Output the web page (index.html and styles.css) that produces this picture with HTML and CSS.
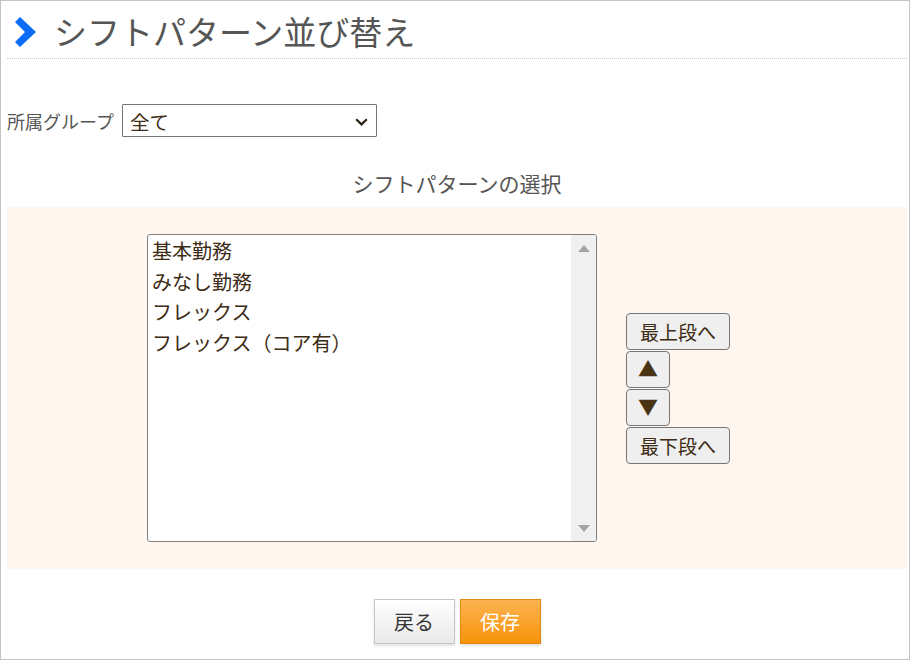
FILE: index.html
```html
<!DOCTYPE html>
<html lang="ja">
<head>
<meta charset="utf-8">
<title>シフトパターン並び替え</title>
<link rel="stylesheet" href="styles.css">
</head>
<body>
<div class="frame">
  <div class="title-row">
    <svg class="chev" width="21" height="30" viewBox="0 0 21 30"><polygon points="0,5 5,0 21,15 5,30 0,25 10,15" fill="#0b6cf6"/></svg>
    <h1 class="title">シフトパターン並び替え</h1>
  </div>

  <div class="form-row">
    <label class="label" for="grp">所属グループ</label>
    <div class="select-wrap">
      <select id="grp" class="select"><option>全て</option></select>
      <svg class="select-arrow" width="13" height="8" viewBox="0 0 13 8"><polyline points="1.2,1.2 6.5,6.4 11.8,1.2" fill="none" stroke="#2b2015" stroke-width="2.2"/></svg>
    </div>
  </div>

  <div class="section-head">シフトパターンの選択</div>

  <div class="panel">
    <div class="listbox">
      <div class="items">
        <div class="item">基本勤務</div>
        <div class="item">みなし勤務</div>
        <div class="item">フレックス</div>
        <div class="item">フレックス（コア有）</div>
      </div>
      <div class="scrollbar">
        <svg width="12" height="7" viewBox="0 0 12 7"><polygon points="0,7 6,0 12,7" fill="#a3a3a3"/></svg>
        <svg width="12" height="7" viewBox="0 0 12 7"><polygon points="0,0 12,0 6,7" fill="#a3a3a3"/></svg>
      </div>
    </div>
    <div class="move-btns">
      <button class="mbtn wide">最上段へ</button>
      <button class="mbtn narrow">▲</button>
      <button class="mbtn narrow">▼</button>
      <button class="mbtn wide">最下段へ</button>
    </div>
  </div>

  <div class="footer">
    <button class="fbtn back">戻る</button>
    <button class="fbtn save">保存</button>
  </div>
</div>
</body>
</html>
```

FILE: styles.css
```css
html, body {
  margin: 0;
  padding: 0;
  background: #fff;
}
body {
  font-family: "Noto Sans CJK JP", "Noto Sans", sans-serif;
  color: #3d2b14;
}
.frame {
  width: 910px;
  height: 660px;
  box-sizing: border-box;
  border: 1px solid #c4c4c4;
  padding: 0 2px 0 6px;
  overflow: hidden;
}
.title-row {
  display: flex;
  align-items: center;
  padding: 10px 0 7px 8px;
  border-bottom: 1px dotted #c8c8c8;
}
.chev {
  display: block;
  margin-top: 1px;
  flex: none;
}
.title {
  margin: 0 0 0 18px;
  font-size: 33px;
  line-height: 40px;
  font-weight: 400;
  color: #555;
}
.form-row {
  display: flex;
  align-items: center;
  margin-top: 45px;
  gap: 8px;
  height: 33px;
}
.label {
  font-size: 18px;
  color: #555;
  line-height: 33px;
  padding-top: 2px;
}
.select-wrap {
  position: relative;
  width: 255px;
  height: 33px;
}
.select {
  appearance: none;
  -webkit-appearance: none;
  display: block;
  width: 255px;
  height: 33px;
  box-sizing: border-box;
  border: 1px solid #767676;
  border-radius: 1px;
  background: #fff;
  font-family: "Noto Sans CJK JP", sans-serif;
  font-size: 19.5px;
  color: #3d2b14;
  padding: 2px 0 0 7px;
  margin: 0;
}
.select-arrow {
  position: absolute;
  right: 9px;
  top: 14px;
  pointer-events: none;
}
.section-head {
  margin-top: 31px;
  text-align: center;
  font-size: 21px;
  line-height: 30px;
  color: #555;
  margin-bottom: 9px;
}
.panel {
  background: #fff6f0;
  padding: 27px 0 27px 140px;
  display: flex;
  align-items: center;
  gap: 29px;
}
.listbox {
  width: 450px;
  height: 308px;
  box-sizing: border-box;
  border: 1px solid #808080;
  border-radius: 3px;
  background: #fff;
  display: flex;
  overflow: hidden;
}
.items {
  flex: 1;
  padding-left: 4px;
  padding-top: 1px;
}
.item {
  font-size: 20px;
  line-height: 30.5px;
  height: 30.5px;
  white-space: nowrap;
}
.scrollbar {
  width: 25px;
  background: #f0f0f0;
  display: flex;
  flex-direction: column;
  justify-content: space-between;
  align-items: center;
  padding: 10px 0 9px;
  box-sizing: border-box;
}
.scrollbar svg {
  display: block;
}
.move-btns {
  display: flex;
  flex-direction: column;
  align-items: flex-start;
  gap: 1px;
}
.mbtn {
  height: 37px;
  box-sizing: border-box;
  border: 1px solid #767676;
  border-radius: 4px;
  background: #efefef;
  font-family: "Noto Sans CJK JP", sans-serif;
  font-size: 19px;
  color: #3d2b14;
  padding: 0;
  margin: 0;
  line-height: 1;
}
.mbtn.wide {
  width: 104px;
}
.mbtn.narrow {
  width: 44px;
  color: #4a3415;
  font-size: 20px;
}
.footer {
  display: flex;
  justify-content: center;
  gap: 5px;
  margin-top: 30px;
}
.fbtn {
  width: 81px;
  height: 45px;
  box-sizing: border-box;
  font-family: "Noto Sans CJK JP", sans-serif;
  font-size: 20px;
  padding: 0;
  margin: 0;
  border-radius: 0;
  box-shadow: 0 2px 3px rgba(0, 0, 0, 0.12);
}
.fbtn.back {
  background: linear-gradient(#ffffff, #e9e9e9);
  border: 1px solid #c6c6c6;
  color: #333;
}
.fbtn.save {
  background: linear-gradient(#fcb350, #f8930a);
  border: 1px solid #e08a14;
  color: #fff;
}
```
